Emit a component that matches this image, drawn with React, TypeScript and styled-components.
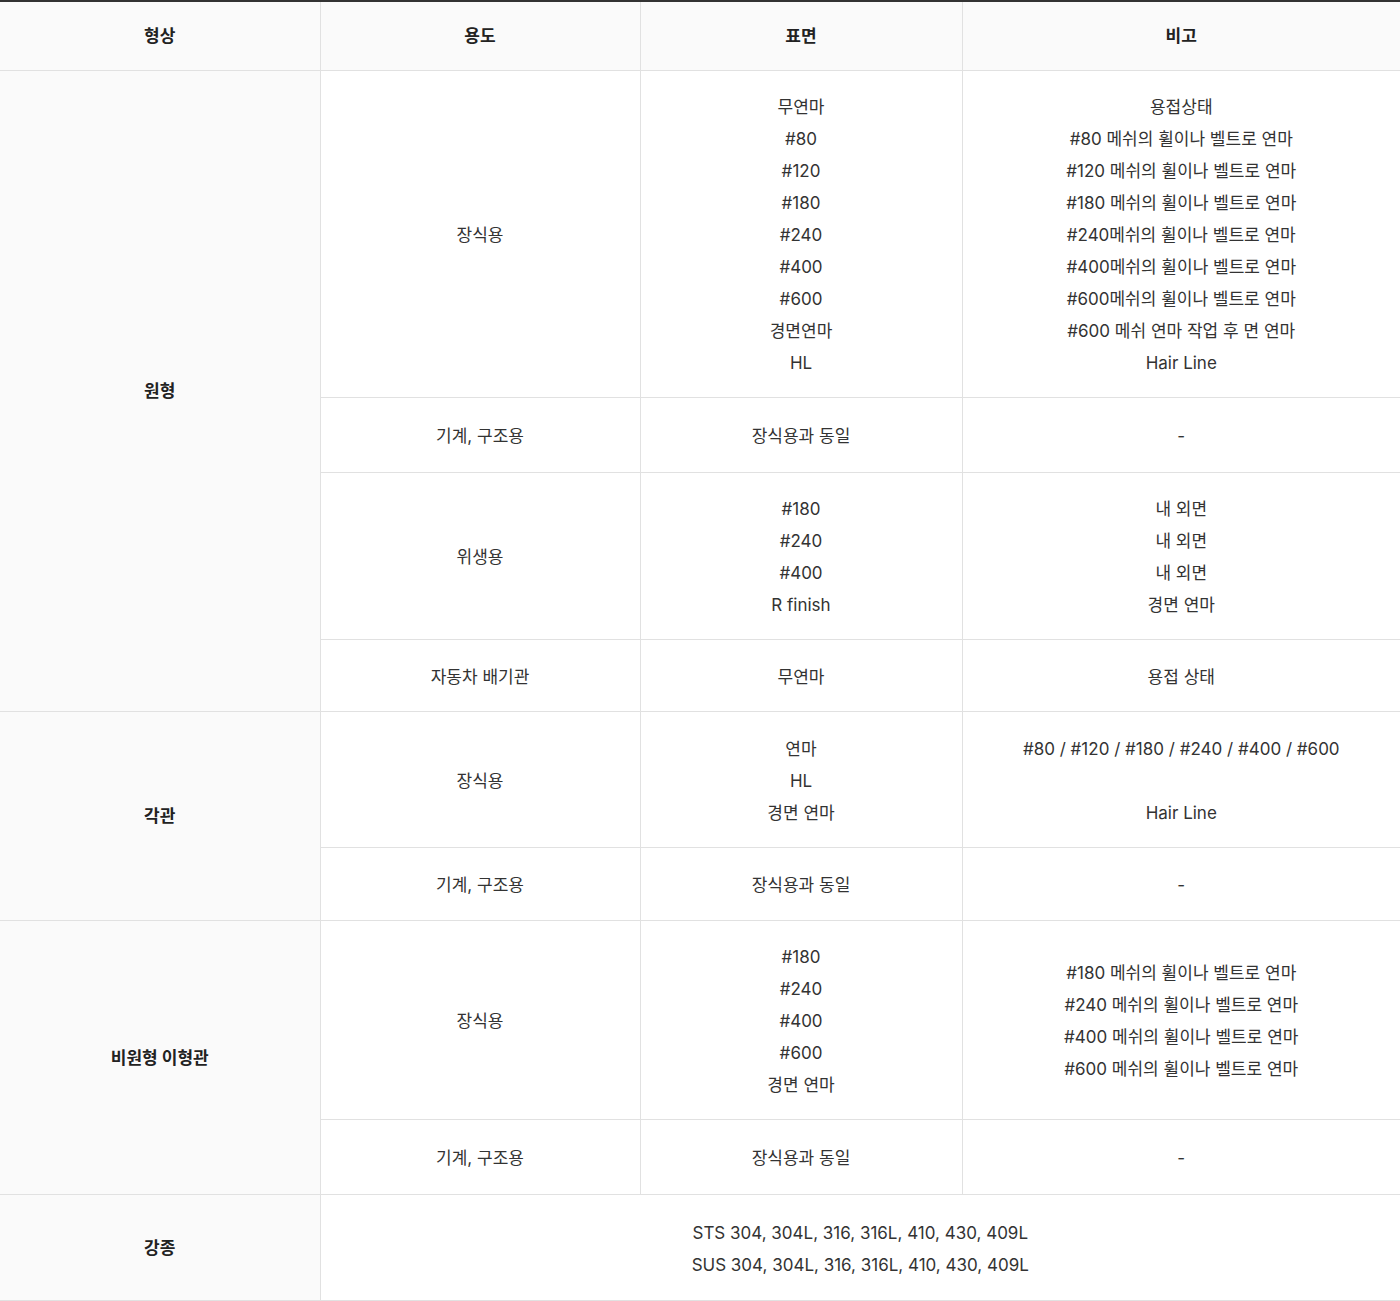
import React from "react";
import styled, { createGlobalStyle } from "styled-components";

const GlobalStyle = createGlobalStyle`
  html, body {
    margin: 0;
    padding: 0;
    background: #fff;
  }
  body {
    font-family: Inter, "Noto Sans CJK KR", sans-serif;
    color: #333;
  }
`;

const Table = styled.table`
  width: 1400px;
  border-collapse: collapse;
  table-layout: fixed;
  border-top: 2px solid #333;
  font-size: 17px;
`;

const HeadCell = styled.th`
  height: 65px;
  padding: 0 0 3px;
  background: #fafafa;
  border-bottom: 1px solid #e1e1e1;
  border-left: 1px solid #e1e1e1;
  font-weight: 700;
  font-size: 17px;
  color: #222;
  text-align: center;
  &:first-child {
    border-left: none;
  }
`;

const Row = styled.tr<{ $h: number }>`
  height: ${(p) => p.$h}px;
`;

const Shape = styled.th`
  background: #fafafa;
  border-bottom: 1px solid #e1e1e1;
  font-weight: 700;
  font-size: 17px;
  color: #222;
  text-align: center;
  padding: 0 0 3px;
`;

const Cell = styled.td`
  padding: 2px 0 0;
  border-bottom: 1px solid #e1e1e1;
  border-left: 1px solid #e1e1e1;
  text-align: center;
  vertical-align: middle;
  line-height: 32px;
  color: #333;
`;

const Line = styled.div`
  line-height: 32px;
  min-height: 32px;
`;

function Lines({ items }: { items: string[] }) {
  return (
    <>
      {items.map((t, i) => (
        <Line key={i}>{t}</Line>
      ))}
    </>
  );
}

export default function App() {
  return (
    <>
      <GlobalStyle />
      <Table>
        <colgroup>
          <col style={{ width: 320 }} />
          <col style={{ width: 320 }} />
          <col style={{ width: 322 }} />
          <col />
        </colgroup>
        <thead>
          <tr>
            <HeadCell>형상</HeadCell>
            <HeadCell>용도</HeadCell>
            <HeadCell>표면</HeadCell>
            <HeadCell>비고</HeadCell>
          </tr>
        </thead>
        <tbody>
          <Row $h={327}>
            <Shape rowSpan={4}>원형</Shape>
            <Cell>장식용</Cell>
            <Cell>
              <Lines
                items={["무연마", "#80", "#120", "#180", "#240", "#400", "#600", "경면연마", "HL"]}
              />
            </Cell>
            <Cell>
              <Lines
                items={[
                  "용접상태",
                  "#80 메쉬의 휠이나 벨트로 연마",
                  "#120 메쉬의 휠이나 벨트로 연마",
                  "#180 메쉬의 휠이나 벨트로 연마",
                  "#240메쉬의 휠이나 벨트로 연마",
                  "#400메쉬의 휠이나 벨트로 연마",
                  "#600메쉬의 휠이나 벨트로 연마",
                  "#600 메쉬 연마 작업 후 면 연마",
                  "Hair Line",
                ]}
              />
            </Cell>
          </Row>
          <Row $h={75}>
            <Cell>기계, 구조용</Cell>
            <Cell>장식용과 동일</Cell>
            <Cell>-</Cell>
          </Row>
          <Row $h={167}>
            <Cell>위생용</Cell>
            <Cell>
              <Lines items={["#180", "#240", "#400", "R finish"]} />
            </Cell>
            <Cell>
              <Lines items={["내 외면", "내 외면", "내 외면", "경면 연마"]} />
            </Cell>
          </Row>
          <Row $h={72}>
            <Cell>자동차 배기관</Cell>
            <Cell>무연마</Cell>
            <Cell>용접 상태</Cell>
          </Row>
          <Row $h={136}>
            <Shape rowSpan={2}>각관</Shape>
            <Cell>장식용</Cell>
            <Cell>
              <Lines items={["연마", "HL", "경면 연마"]} />
            </Cell>
            <Cell>
              <Lines items={["#80 / #120 / #180 / #240 / #400 / #600", "", "Hair Line"]} />
            </Cell>
          </Row>
          <Row $h={73}>
            <Cell>기계, 구조용</Cell>
            <Cell>장식용과 동일</Cell>
            <Cell>-</Cell>
          </Row>
          <Row $h={199}>
            <Shape rowSpan={2}>비원형 이형관</Shape>
            <Cell>장식용</Cell>
            <Cell>
              <Lines items={["#180", "#240", "#400", "#600", "경면 연마"]} />
            </Cell>
            <Cell>
              <Lines
                items={[
                  "#180 메쉬의 휠이나 벨트로 연마",
                  "#240 메쉬의 휠이나 벨트로 연마",
                  "#400 메쉬의 휠이나 벨트로 연마",
                  "#600 메쉬의 휠이나 벨트로 연마",
                ]}
              />
            </Cell>
          </Row>
          <Row $h={75}>
            <Cell>기계, 구조용</Cell>
            <Cell>장식용과 동일</Cell>
            <Cell>-</Cell>
          </Row>
          <Row $h={106}>
            <Shape>강종</Shape>
            <Cell colSpan={3}>
              <Lines
                items={[
                  "STS 304, 304L, 316, 316L, 410, 430, 409L",
                  "SUS 304, 304L, 316, 316L, 410, 430, 409L",
                ]}
              />
            </Cell>
          </Row>
        </tbody>
      </Table>
    </>
  );
}
